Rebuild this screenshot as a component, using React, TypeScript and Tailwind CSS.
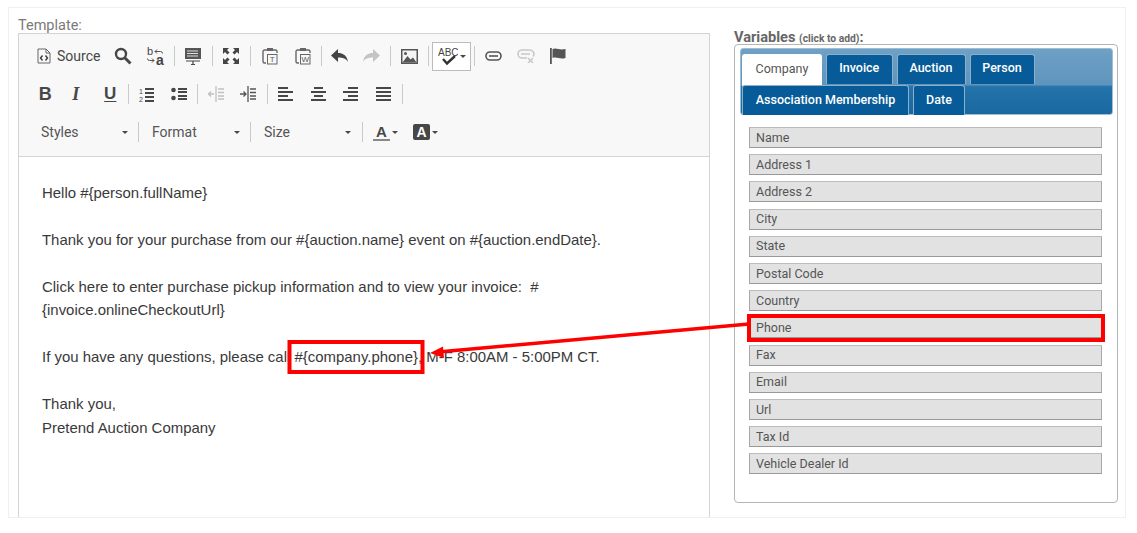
import type { ReactNode } from "react";

const ink = "#474747";

function Btn({ children, w = "w-[32.5px]" }: { children: ReactNode; w?: string }) {
  return <div className={`${w} h-full flex items-center justify-center shrink-0`}>{children}</div>;
}

function Sep({ w = "w-[5px]" }: { w?: string }) {
  return (
    <div className={`${w} shrink-0 flex justify-center`}>
      <div className="w-px h-5 bg-[#c9c9c9]" />
    </div>
  );
}

function Caret() {
  return <span className="block w-0 h-0 border-x-[3.5px] border-x-transparent border-t-[3.5px] border-t-[#474747]" />;
}

function Combo({ label, w, pl, pr }: { label: string; w: string; pl: string; pr: string }) {
  return (
    <div className={`${w} ${pl} ${pr} shrink-0 flex items-center justify-between text-[14px] text-[#555]`}>
      <span>{label}</span>
      <Caret />
    </div>
  );
}

function Ico({ w = 16, h = 16, children }: { w?: number; h?: number; children: ReactNode }) {
  return (
    <svg width={w} height={h} viewBox={`0 0 ${w} ${h}`} fill="none" stroke={ink} strokeWidth={1.4}>
      {children}
    </svg>
  );
}

function Lines({ rows }: { rows: [number, number, number][] }) {
  return (
    <>
      {rows.map(([x, y, x2], i) => (
        <path key={i} d={`M${x} ${y}H${x2}`} strokeWidth={2} />
      ))}
    </>
  );
}

function Clipboard({ mark }: { mark: string }) {
  return (
    <Ico w={16} h={18}>
      <path d="M5 3H2.5a1.5 1.5 0 0 0-1.5 1.5v10A1.5 1.5 0 0 0 2.5 16H4M11 3h2.5A1.5 1.5 0 0 1 15 4.500V6" stroke="#666" />
      <rect x="5" y="1" width="6" height="3" fill="#666" stroke="none" />
      <rect x="5.500" y="7.500" width="9.500" height="9.500" stroke="#666" strokeWidth={1} />
      <text x="10.200" y="15" fontSize="8" textAnchor="middle" fill="#555" stroke="none" fontFamily="Liberation Sans, sans-serif">{mark}</text>
    </Ico>
  );
}

const variables = [
  "Name", "Address 1", "Address 2", "City", "State", "Postal Code", "Country",
  "Phone", "Fax", "Email", "Url", "Tax Id", "Vehicle Dealer Id",
];

function Tab({ label, w, active, low }: { label: string; w: string; active?: boolean; low?: boolean }) {
  return (
    <div
      className={`${w} flex items-center justify-center rounded-t-[3px] border border-b-0 border-[#8db0ca] text-[12.5px] ${
        active ? "h-[32px] bg-white text-[#555] border-white" : "h-[30px] bg-[#065b98] text-white font-medium"
      }`}
    >
      <span className={low ? "" : "-mt-[2px]"}>{label}</span>
    </div>
  );
}

export default function App() {
  return (
    <div className="relative w-[1137px] h-[533px] bg-white overflow-hidden font-['Roboto',sans-serif]">
      <div className="ml-2 mt-[7px] w-[1118px] h-[511px] border border-[#f0f0f0] flex overflow-hidden">
        {/* template editor */}
        <div className="w-[725px] pl-[9px] shrink-0">
          <div className="h-[25px] pt-[8px] text-[14.5px] leading-[19px] text-[#7a7a7a]">Template:</div>
          <div className="w-[692px] h-[600px] border border-[#d4d4d4] border-b-0">
            <div className="h-[123px] bg-[#f8f8f8] border-b border-[#d4d4d4] pt-[3px] pl-[10px]">
              <div className="h-[38px] flex items-center text-[#474747]">
                <div className="w-[78px] shrink-0 flex items-center pl-[8px] gap-[6px]">
                  <svg width="14" height="16" viewBox="0 0 14 16" fill="none" stroke="#666" strokeWidth="1">
                    <path d="M1 1h8l4 4v10H1z" />
                    <path d="M9 1v4h4" />
                    <path d="M5.500 7.500 3.500 10l2 2.500M8.500 7.500l2 2.500-2 2.500" strokeWidth="1.300" stroke="#333" />
                  </svg>
                  <span className="text-[14px]">Source</span>
                </div>
                <Btn>
                  <Ico w={18} h={18}>
                    <circle cx="7" cy="7" r="5" strokeWidth={2.400} />
                    <path d="m11 11 5.500 5.500" strokeWidth={3} />
                  </Ico>
                </Btn>
                <Btn>
                  <svg width="20" height="24" viewBox="0 0 20 24" fill="none" stroke="#555" strokeWidth="1">
                    <text x="1" y="11" fontSize="11" fill="#444" stroke="none" fontFamily="Liberation Sans, sans-serif">b</text>
                    <text x="10" y="21" fontSize="14" fontWeight="700" fill="#444" stroke="none" fontFamily="Liberation Sans, sans-serif">a</text>
                    <path d="M9 7.500h5.500a2 2 0 0 1 2 2M9 7.500l2-2M9 7.500l2 2" />
                    <path d="M8 16.500H3.500a2 2 0 0 1-2-2M8 16.500l-2-2M8 16.500l-2 2" />
                  </svg>
                </Btn>
                <Sep />
                <Btn>
                  <Ico w={16} h={18}>
                    <rect x="0" y="1" width="16" height="11" fill="#555" stroke="none" />
                    <path d="M2 4h11M2 6.500h11M2 9h11" stroke="#eee" strokeWidth={0.900} />
                    <path d="M1 14h14M8 14v3.500M6 17.500h4" strokeWidth={1.200} />
                  </Ico>
                </Btn>
                <Sep />
                <Btn>
                  <svg width="18" height="18" viewBox="0 0 18 18" fill="#444">
                    <path d="M1 1h6L5 3l2.500 2.500-2 2L3 5 1 7zM17 1v6l-2-2-2.500 2.500-2-2L13 3l-2-2zM1 17v-6l2 2 2.500-2.500 2 2L5 15l2 2zM17 17h-6l2-2-2.500-2.500 2-2L15 13l2-2z" />
                  </svg>
                </Btn>
                <Sep w="w-[7px]" />
                <Btn><Clipboard mark="T" /></Btn>
                <Btn><Clipboard mark="W" /></Btn>
                <Sep w="w-[4px]" />
                <Btn>
                  <svg width="17" height="14" viewBox="0 0 17 14" fill="#444">
                    <path d="M7 0v4c5 0 9 2.500 10 9-2-3.500-5-4.500-10-4.500V13L0 6.500z" />
                  </svg>
                </Btn>
                <Btn>
                  <svg width="17" height="14" viewBox="0 0 17 14" fill="#c4c4c4">
                    <path d="M10 0v4C5 4 1 6.500 0 13c2-3.500 5-4.500 10-4.500V13l7-6.500z" />
                  </svg>
                </Btn>
                <Sep />
                <Btn>
                  <svg width="17" height="15" viewBox="0 0 17 15">
                    <rect width="17" height="15" fill="#555" />
                    <rect x="1.500" y="1.500" width="14" height="12" fill="#f4f4f4" />
                    <circle cx="4.500" cy="4.500" r="1.500" fill="#555" />
                    <path d="M1.500 13.500 6.500 7l3 3.500 2.500-2 3.500 5z" fill="#555" />
                  </svg>
                </Btn>
                <Sep />
                <div className="ml-[1.5px] w-[39px] h-[29px] shrink-0 bg-white border border-[#bcbcbc] flex items-center justify-center gap-[2px]">
                  <svg width="20" height="21" viewBox="0 0 20 21" fill="none">
                    <text x="0" y="10" fontSize="10" fill="#444" fontFamily="Liberation Sans, sans-serif">ABC</text>
                    <path d="m5 13 4 4.500L17 10" stroke="#333" strokeWidth="2.400" />
                  </svg>
                  <Caret />
                </div>
                <Sep w="w-[6px]" />
                <Btn>
                  <svg width="17" height="10" viewBox="0 0 17 10" fill="none" stroke="#555" strokeWidth="1.600">
                    <rect x="1" y="1" width="15" height="8" rx="4" />
                    <path d="M4 5h9" />
                  </svg>
                </Btn>
                <Btn>
                  <svg width="18" height="14" viewBox="0 0 18 14" fill="none" stroke="#c8c8c8" strokeWidth="1.600">
                    <path d="M10 9H5a4 4 0 0 1 0-8h8a4 4 0 0 1 3 6.500M4 5h9" />
                    <path d="m11 9 5 5m0-5-5 5" />
                  </svg>
                </Btn>
                <Btn>
                  <svg width="16" height="16" viewBox="0 0 16 16" fill="#555">
                    <path d="M0 0h1.800v16H0zM2.500 1c2-1 4-.5 6 0s4 .7 7 0v9c-3 .8-5 .5-7 0s-4-.8-6 0z" />
                  </svg>
                </Btn>
              </div>

              <div className="h-[38px] flex items-center">
                <Btn><span className="text-[18px] font-['Liberation_Sans',sans-serif] font-bold text-[#474747]">B</span></Btn>
                <Btn><span className="text-[18px] font-['Liberation_Serif',serif] italic font-bold text-[#474747] -ml-[4px]">I</span></Btn>
                <Btn><span className="text-[17px] font-['Liberation_Sans',sans-serif] font-bold text-[#474747] underline underline-offset-2">U</span></Btn>
                <Sep w="w-[4px]" />
                <Btn>
                  <Ico w={15} h={15}>
                    <text x="0" y="7" fontSize="7" fill={ink} stroke="none" fontFamily="Liberation Sans, sans-serif">1</text>
                    <text x="0" y="15" fontSize="7" fill={ink} stroke="none" fontFamily="Liberation Sans, sans-serif">2</text>
                    <Lines rows={[[6, 2, 15], [6, 6, 15], [6, 10, 15], [6, 14, 15]]} />
                  </Ico>
                </Btn>
                <Btn>
                  <Ico w={16} h={14}>
                    <circle cx="2.500" cy="3" r="2.300" fill={ink} stroke="none" />
                    <circle cx="2.500" cy="11" r="2.300" fill={ink} stroke="none" />
                    <Lines rows={[[7, 2, 16], [7, 5, 16], [7, 9, 16], [7, 12, 16]]} />
                  </Ico>
                </Btn>
                <Sep w="w-[4px]" />
                <Btn>
                  <svg width="16" height="16" viewBox="0 0 16 16" fill="none" stroke="#c0c0c0" strokeWidth="1.300">
                    <path d="M8 0v16M10 3h6M10 6.500h6M10 10h6M10 13h6M0 8h6M3 5.500 0.500 8 3 10.500" />
                  </svg>
                </Btn>
                <Btn>
                  <svg width="16" height="16" viewBox="0 0 16 16" fill="none" stroke="#555" strokeWidth="1.300">
                    <path d="M8 0v16M10 3h6M10 6.500h6M10 10h6M10 13h6M0 8h6M3.500 5.500 6 8l-2.500 2.500" />
                  </svg>
                </Btn>
                <Sep />
                <Btn><Ico w={15} h={14}><Lines rows={[[0, 1, 10], [0, 5, 15], [0, 9, 10], [0, 13, 15]]} /></Ico></Btn>
                <Btn><Ico w={15} h={14}><Lines rows={[[3, 1, 12], [0, 5, 15], [3, 9, 12], [0, 13, 15]]} /></Ico></Btn>
                <Btn><Ico w={15} h={14}><Lines rows={[[5, 1, 15], [0, 5, 15], [5, 9, 15], [0, 13, 15]]} /></Ico></Btn>
                <Btn><Ico w={15} h={14}><Lines rows={[[0, 1, 15], [0, 5, 15], [0, 9, 15], [0, 13, 15]]} /></Ico></Btn>
                <Sep />
              </div>

              <div className="h-[38px] flex items-center">
                <Combo label="Styles" w="w-[107px]" pl="pl-[12px]" pr="pr-[8px]" />
                <Sep />
                <Combo label="Format" w="w-[107px]" pl="pl-[11px]" pr="pr-[8px]" />
                <Sep />
                <Combo label="Size" w="w-[107px]" pl="pl-[11px]" pr="pr-[9px]" />
                <Sep />
                <div className="ml-[8px] flex items-center gap-[2px]">
                  <span className="w-[17px] text-center text-[15px] leading-[15px] font-['Liberation_Sans',sans-serif] font-bold text-[#474747] border-b-2 border-[#888]">A</span>
                  <Caret />
                </div>
                <div className="ml-[15px] flex items-center gap-[2px]">
                  <span className="w-[17px] h-[16px] rounded-[2px] bg-[#474747] text-center text-[14px] leading-[16px] font-['Liberation_Sans',sans-serif] font-bold text-white">A</span>
                  <Caret />
                </div>
              </div>
            </div>

            <div className="pt-[23.5px] pl-[23px] text-[14.95px] leading-[23.5px] text-[#3a3a3a] font-['Liberation_Sans',sans-serif]">
              <p>Hello #{"{"}person.fullName{"}"}</p>
              <p className="mt-[23.5px]">Thank you for your purchase from our #{"{"}auction.name{"}"} event on #{"{"}auction.endDate{"}"}.</p>
              <p className="mt-[23.5px]">
                Click here to enter purchase pickup information and to view your invoice:&nbsp; #
                <br />
                {"{"}invoice.onlineCheckoutUrl{"}"}
              </p>
              <p className="mt-[23.5px]">If you have any questions, please call #{"{"}company.phone{"}"}, M-F 8:00AM - 5:00PM CT.</p>
              <p className="mt-[23.5px]">
                Thank you,
                <br />
                Pretend Auction Company
              </p>
            </div>
          </div>
        </div>

        {/* variables list */}
        <div className="w-[384px] shrink-0">
          <div className="h-[36px] pt-[20px] text-[#666] font-bold leading-[18px] text-[14.6px] whitespace-nowrap">
            Variables <span className="text-[10.3px]">(click to add)</span>:
          </div>
          <div className="h-[459px] border border-[#b5b5b5] rounded-[4px] pt-[3px] px-[5px]">
            <div className="w-[373px] h-[67px] rounded-[3px] border border-[#9fbdd3] pt-[5px] bg-[linear-gradient(180deg,#6fa0c5_0%,#5f95bd_55%,#2473ab_58%,#1a68a0_100%)]">
              <div className="flex gap-[4px] h-[30px] items-start pl-[1px]">
                <Tab label="Company" w="w-[80px]" active />
                <Tab label="Invoice" w="w-[66.5px]" />
                <Tab label="Auction" w="w-[69px]" />
                <Tab label="Person" w="w-[65px]" />
              </div>
              <div className="flex gap-[4px] h-[30px] pl-[1px] mt-[1px]">
                <Tab label="Association Membership" w="w-[167px]" low />
                <Tab label="Date" w="w-[52px]" low />
              </div>
            </div>
            <div className="mt-[12px] ml-[9px] w-[353px] grid gap-y-[6.2px]">
              {variables.map((name) => (
                <div
                  key={name}
                  className="h-[21px] bg-[#e2e2e2] border border-[#a8a8a8] border-t-[#bcbcbc] border-b-[#999] pl-[6px] pt-px flex items-center text-[12.5px] text-[#555]"
                >
                  {name}
                </div>
              ))}
            </div>
          </div>
        </div>
      </div>

      {/* red annotations drawn over the screenshot */}
      <svg className="absolute left-0 top-0 pointer-events-none" width="1137" height="533" viewBox="0 0 1137 533" fill="none">
        <rect x="289.500" y="342" width="133" height="30" stroke="#f00" strokeWidth="4" />
        <rect x="749" y="316" width="354" height="24" stroke="#f00" strokeWidth="4" />
        <path d="M749 324 438 352" stroke="#f00" strokeWidth="3.500" />
        <path d="m430 353 13-6.500 1 11.500z" fill="#f00" />
      </svg>
    </div>
  );
}
